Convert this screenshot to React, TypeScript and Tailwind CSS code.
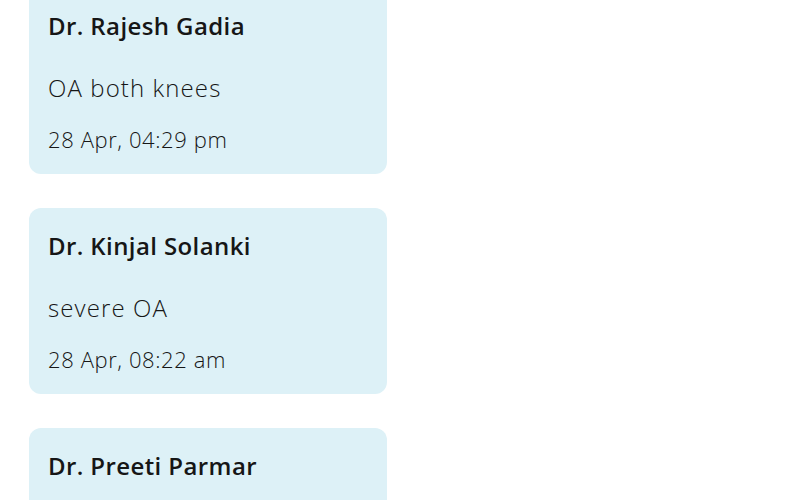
const consults = [
  { doctor: 'Dr. Rajesh Gadia', note: 'OA both knees', time: '28 Apr, 04:29 pm' },
  { doctor: 'Dr. Kinjal Solanki', note: 'severe OA', time: '28 Apr, 08:22 am' },
  { doctor: 'Dr. Preeti Parmar' },
];

export default function App() {
  return (
    <div className="h-[500px] w-[800px] overflow-hidden bg-white font-['Open_Sans',sans-serif] text-[#161616]">
      <div className="-mt-[12px] flex flex-col gap-[34px] pl-[29px]">
        {consults.map((c) => (
          <div
            key={c.doctor}
            className="flex min-h-[186px] w-[358px] flex-col rounded-[12px] bg-[#ddf1f7] px-[19px] pb-[19px] pt-[22px]"
          >
            <div className="text-[24px] font-semibold leading-[32px] tracking-[0.4px]">{c.doctor}</div>
            {c.note && <div className="mt-[30px] text-[24px] font-light leading-[32px] tracking-[1.1px]">{c.note}</div>}
            {c.time && <div className="mt-[19px] text-[22px] font-light leading-[32px] tracking-[0.6px]">{c.time}</div>}
          </div>
        ))}
      </div>
    </div>
  );
}
